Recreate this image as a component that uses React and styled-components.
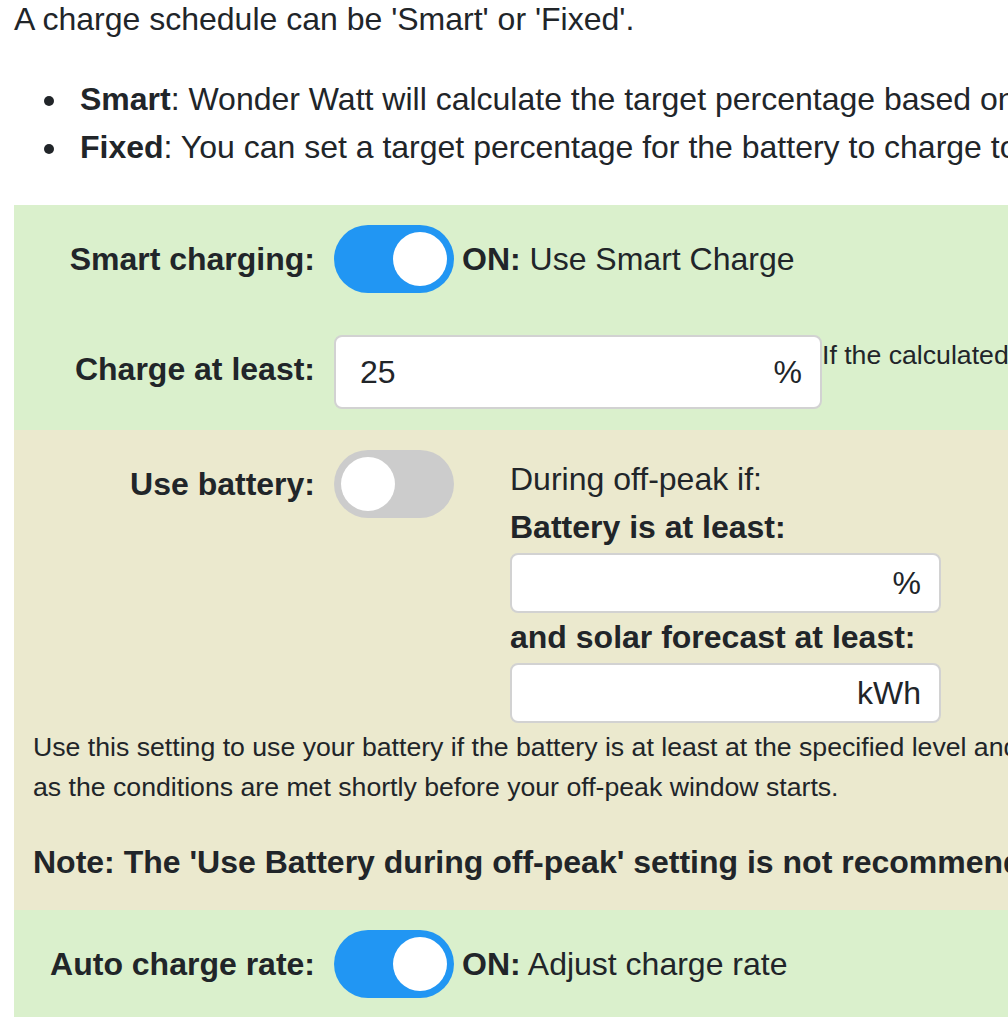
import React from "react";
import styled, { createGlobalStyle } from "styled-components";

const GlobalStyle = createGlobalStyle`
  html, body {
    margin: 0;
    padding: 0;
    overflow: hidden;
    background: #ffffff;
  }
  body {
    font-family: "Liberation Sans", Arial, sans-serif;
    font-size: 32px;
    line-height: 1.5;
    color: #212529;
  }
`;

const ChargeSchedulePage = () => {
  return (
    <Page>
      <GlobalStyle />
      <Intro>A charge schedule can be 'Smart' or 'Fixed'.</Intro>
      <List>
        <li>
          <b>Smart</b>: Wonder Watt will calculate the target percentage based on your usage and the solar forecast.
        </li>
        <li>
          <b>Fixed</b>: You can set a target percentage for the battery to charge to during the off-peak window.
        </li>
      </List>

      <Section $tone="green" $top={20} $bottom={21}>
        <Row>
          <Label>Smart charging:</Label>
          <Control>
            <Switch $on />
            <State>
              <b>ON:</b> Use Smart Charge
            </State>
          </Control>
        </Row>
        <Row>
          <Label>Charge at least:</Label>
          <Control $top>
            <Field $w={488} $h={74} $left={24}>
              <FieldInput defaultValue="25" />
              <Unit>%</Unit>
            </Field>
            <Hint>If the calculated target is lower than this, the battery will be charged to this level instead.</Hint>
          </Control>
        </Row>
      </Section>

      <Section $tone="beige" $top={20} $bottom={24}>
        <Row>
          <Label>Use battery:</Label>
          <Control $top>
            <Switch />
            <OffPeak>
              <span>During off-peak if:</span>
              <b>Battery is at least:</b>
              <Field $w={431} $h={60} $left={20}>
                <FieldInput />
                <Unit>%</Unit>
              </Field>
              <b>and solar forecast at least:</b>
              <Field $w={431} $h={60} $left={20}>
                <FieldInput />
                <Unit>kWh</Unit>
              </Field>
            </OffPeak>
          </Control>
        </Row>
        <Small>
          Use this setting to use your battery if the battery is at least at the specified level and the solar forecast is at least the specified amount, as long
          <br />
          as the conditions are met shortly before your off-peak window starts.
        </Small>
        <Note>
          Note: The 'Use Battery during off-peak' setting is not recommended for most users.
        </Note>
      </Section>

      <Section $tone="green" $top={20} $bottom={19}>
        <Row>
          <Label>Auto charge rate:</Label>
          <Control>
            <Switch $on />
            <State>
              <b>ON:</b> Adjust charge rate
            </State>
          </Control>
        </Row>
      </Section>
    </Page>
  );
};

// Styled components
const Page = styled.div`
  width: 1500px;
  padding-left: 14px;
`;

const Intro = styled.p`
  margin: -5px 0 32px;
  white-space: nowrap;
`;

const List = styled.ul`
  margin: 0 0 34px;
  padding-left: 56px;

  li {
    padding-left: 10px;
    white-space: nowrap;
  }
`;

const Section = styled.div`
  background-color: ${(props) => (props.$tone === "beige" ? "#ebe9ce" : "#daf0cc")};
  padding-top: ${(props) => props.$top}px;
  padding-bottom: ${(props) => props.$bottom}px;
`;

const Row = styled.div`
  display: grid;
  grid-template-columns: 301px 1fr;
  column-gap: 19px;
  align-items: start;

  & + & {
    margin-top: 42px;
  }
`;

const Label = styled.div`
  height: 68px;
  display: flex;
  align-items: center;
  justify-content: flex-end;
  font-weight: bold;
  white-space: nowrap;
`;

const Control = styled.div`
  display: flex;
  align-items: ${(props) => (props.$top ? "flex-start" : "center")};
  white-space: nowrap;
`;

const Switch = styled.span`
  flex: none;
  box-sizing: border-box;
  width: 120px;
  height: 68px;
  padding: 7px;
  border-radius: 34px;
  background-color: ${(props) => (props.$on ? "#2196f3" : "#cccccc")};
  display: flex;
  justify-content: ${(props) => (props.$on ? "flex-end" : "flex-start")};

  &::before {
    content: "";
    width: 54px;
    height: 54px;
    border-radius: 50%;
    background: #ffffff;
  }
`;

const State = styled.span`
  margin-left: 8px;
`;

const Field = styled.div`
  flex: none;
  box-sizing: border-box;
  display: flex;
  align-items: center;
  width: ${(props) => props.$w}px;
  height: ${(props) => props.$h}px;
  padding: 0 18px 0 ${(props) => props.$left}px;
  background: #ffffff;
  border: 2px solid #d2d2d2;
  border-radius: 8px;
`;

const FieldInput = styled.input`
  flex: 1;
  min-width: 0;
  padding: 0;
  border: none;
  outline: none;
  background: transparent;
  font: inherit;
  color: inherit;
`;

const Unit = styled.span`
  flex: none;
`;

const Hint = styled.span`
  font-size: 26.67px;
  line-height: 40px;
`;

const OffPeak = styled.div`
  display: flex;
  flex-direction: column;
  align-items: flex-start;
  margin-left: 56px;
  padding-top: 5px;

  ${Field} {
    margin-top: 2px;
  }
`;

const Small = styled.p`
  margin: 4px 0 0 19px;
  font-size: 26.67px;
  line-height: 40px;
  white-space: nowrap;
`;

const Note = styled.p`
  margin: 31px 0 0 19px;
  font-weight: bold;
  white-space: nowrap;
`;

export default ChargeSchedulePage;
